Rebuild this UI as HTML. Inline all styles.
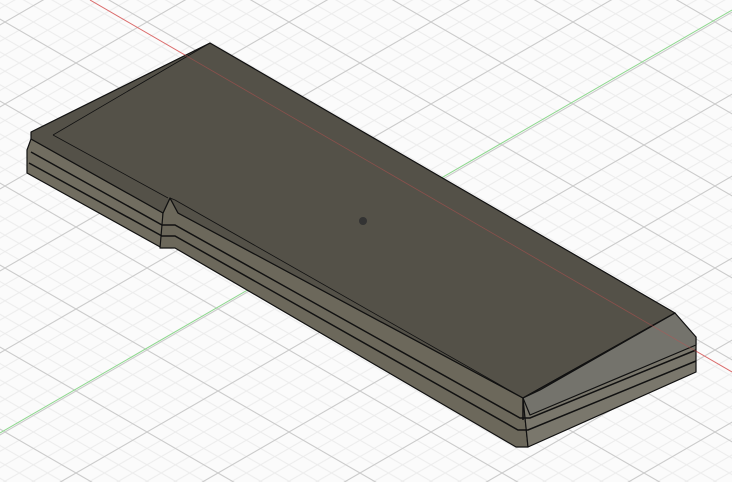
<!DOCTYPE html>
<html><head><style>html,body{margin:0;padding:0;background:#fff;overflow:hidden}</style></head>
<body>
<svg width="732" height="482" viewBox="0 0 732 482" xmlns="http://www.w3.org/2000/svg">
<defs>
<pattern id="g" width="28.4" height="16.4" patternUnits="userSpaceOnUse" patternTransform="translate(5,22)">
<line x1="0" y1="0" x2="28.4" y2="16.4" stroke="#ececec" stroke-width="1"/>
<line x1="0" y1="16.4" x2="28.4" y2="0" stroke="#ececec" stroke-width="1"/>
</pattern>
<pattern id="G" width="142" height="82" patternUnits="userSpaceOnUse" patternTransform="translate(5,22)">
<line x1="0" y1="0" x2="142" y2="82" stroke="#cbcbcb" stroke-width="1"/>
<line x1="0" y1="82" x2="142" y2="0" stroke="#cbcbcb" stroke-width="1"/>
</pattern>
</defs>
<rect width="732" height="482" fill="#fbfbfb"/>
<rect width="732" height="482" fill="url(#g)"/>
<rect width="732" height="482" fill="url(#G)"/>
<line x1="90" y1="0" x2="732" y2="372" stroke="#f08a8a" stroke-width="1"/>
<line x1="0" y1="433" x2="732" y2="10" stroke="#8ed88e" stroke-width="1"/>
<g stroke="#111" stroke-width="1.2" stroke-linejoin="round">
<polygon points="31,139 163,213 162,248 27,173 27,150" fill="#716d60"/>
<polygon points="163,213 170,198 178,213 523,398 528,447 516,447 175,248 160,248" fill="#6c685b"/>
<polygon points="523,398 696,337 696,372 528,447" fill="#7a776c"/>
<polygon points="210,43 675,313 523,398 178,213 170,198 163,213 31,139 31,132" fill="#545148"/>
<polygon points="675,313 696,337 696,345 530,415 523,398" fill="#74736c"/>
<polygon points="675,313 540,390 523,398" fill="#4c4a43"/>
</g>
<g stroke="#111" stroke-width="1.5" fill="none">
<polyline points="31,152 162,225 175,225 520,418 530,418 696,350"/>
<polyline points="29,163 162,236 175,236 518,430 528,430 696,361"/>
<line x1="53" y1="135" x2="210" y2="43" stroke-width="0.8"/>
<line x1="53" y1="135" x2="168" y2="198" stroke-width="0.8"/>
<line x1="175" y1="200" x2="523" y2="398" stroke-width="0.8"/>
<line x1="170" y1="198" x2="175" y2="200" stroke-width="0.8"/>
<line x1="523" y1="398" x2="523" y2="420"/>
</g>
<line x1="90" y1="0" x2="732" y2="372" stroke="#c05050" stroke-width="0.8" opacity="0.5"/>
<circle cx="363" cy="221" r="4" fill="#333"/>
</svg>
</body></html>
